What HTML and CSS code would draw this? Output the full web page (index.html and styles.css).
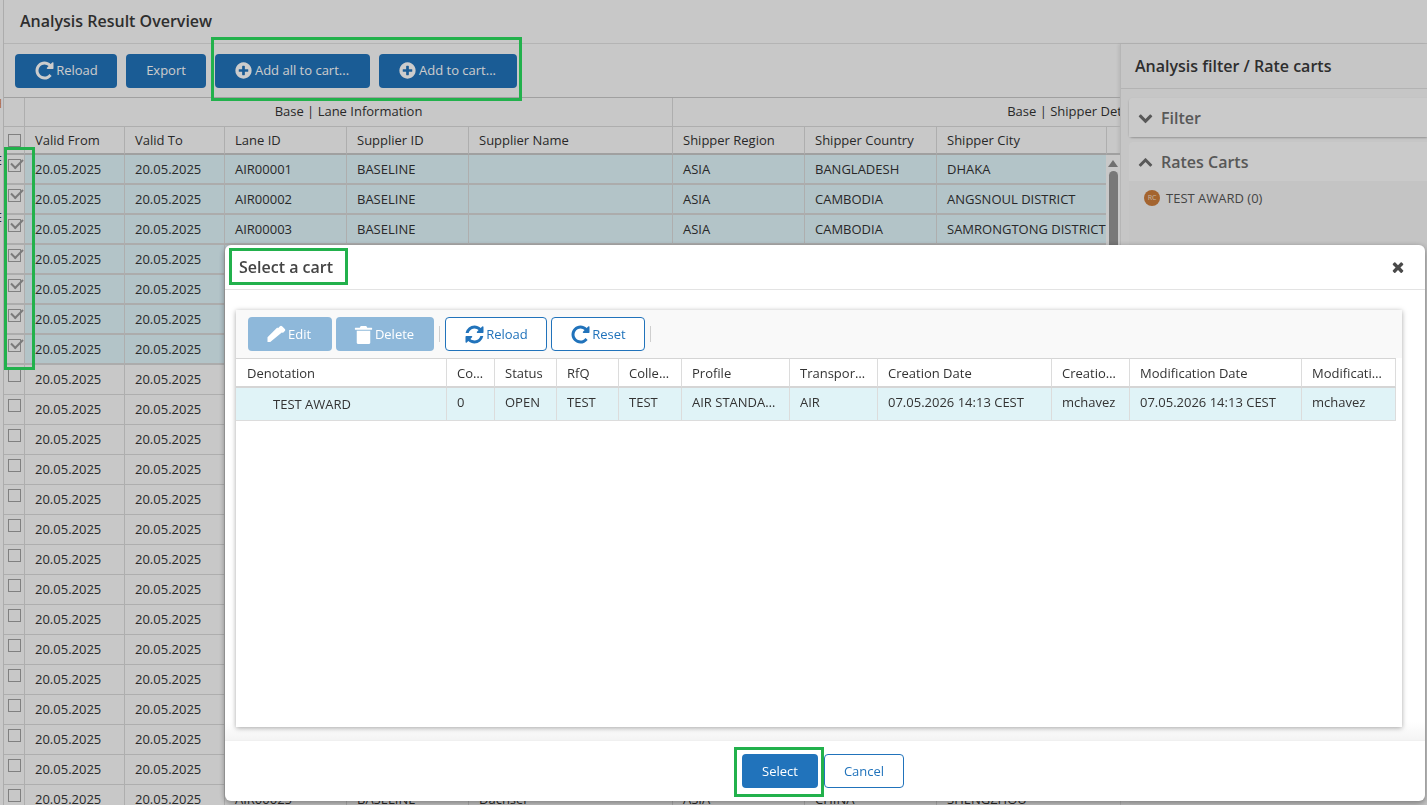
FILE: index.html
```html
<!DOCTYPE html>
<html lang="en">
<head>
    <meta charset="UTF-8">
    <title>Analysis Result Overview</title>
    <link rel="stylesheet" href="styles.css">
</head>
<body>
    <svg class="sprite" xmlns="http://www.w3.org/2000/svg">
        <symbol id="i-repeat" viewBox="0 0 1792 1792"><path d="M1664 256v448q0 26-19 45t-45 19h-448q-42 0-59-40-17-39 14-69l138-138q-148-137-349-137-104 0-198.500 40.500t-163.500 109.500-109.500 163.500-40.500 198.500 40.500 198.500 109.500 163.500 163.500 109.500 198.500 40.500q119 0 225-52t179-147q7-10 23-12 15 0 25 9l137 138q9 8 9.500 20.500t-7.500 22.500q-109 132-264 204.500t-327 72.500q-156 0-298-61t-245-164-164-245-61-298 61-298 164-245 245-164 298-61q147 0 284.500 55.500t244.500 156.500l130-129q29-31 70-14 39 17 39 59z"/></symbol>
        <symbol id="i-plus" viewBox="0 0 1792 1792"><path d="M1344 960v-128q0-26-19-45t-45-19h-256v-256q0-26-19-45t-45-19h-128q-26 0-45 19t-19 45v256h-256q-26 0-45 19t-19 45v128q0 26 19 45t45 19h256v256q0 26 19 45t45 19h128q26 0 45-19t19-45v-256h256q26 0 45-19t19-45zm320-64q0 209-103 385.500t-279.500 279.500-385.500 103-385.500-103-279.500-279.500-103-385.500 103-385.500 279.500-279.500 385.500-103 385.500 103 279.500 279.500 103 385.500z"/></symbol>
        <symbol id="i-refresh" viewBox="0 0 1792 1792"><path d="M1639 1056q0 5-1 7-64 268-268 434.500t-478 166.500q-146 0-282.500-55t-243.500-157l-129 129q-19 19-45 19t-45-19-19-45v-448q0-26 19-45t45-19h448q26 0 45 19t19 45-19 45l-137 137q71 66 161 102t187 36q134 0 250-65t186-179q11-17 53-117 8-23 30-23h192q13 0 22.500 9.500t9.500 22.500zm25-800v448q0 26-19 45t-45 19h-448q-26 0-45-19t-19-45 19-45l138-138q-148-137-349-137-134 0-250 65t-186 179q-11 17-53 117-8 23-30 23h-199q-13 0-22.500-9.500t-9.500-22.500v-7q65-268 270-434.500t480-166.500q146 0 284 55.500t245 156.500l130-129q19-19 45-19t45 19 19 45z"/></symbol>
        <symbol id="i-pencil" viewBox="0 0 1792 1792"><path d="M363 1536l-1 0H128v-416l832-832 416 416zM1643 512q0 53-37 90l-166 166-416-416 166-165q36-38 90-38 53 0 91 38l235 234q37 39 37 91z"/></symbol>
        <symbol id="i-trash" viewBox="0 0 1792 1792"><path d="M320 576h1152v1024q0 96-96 96H416q-96 0-96-96zM192 320h384l64-128q16-32 64-32h384q48 0 64 32l64 128h384q32 0 32 32v96q0 32-32 32H192q-32 0-32-32v-96q0-32 32-32z"/></symbol>
        <symbol id="i-down" viewBox="0 0 1792 1792"><path d="M1683 808l-742 741q-19 19-45 19t-45-19l-742-741q-19-19-19-45.500t19-45.500l166-165q19-19 45-19t45 19l531 531 531-531q19-19 45-19t45 19l166 165q19 19 19 45.500t-19 45.500z"/></symbol>
        <symbol id="i-up" viewBox="0 0 1792 1792"><path d="M1683 1331l-166 165q-19 19-45 19t-45-19l-531-531-531 531q-19 19-45 19t-45-19l-166-165q-19-19-19-45.500t19-45.500l742-741q19-19 45-19t45 19l742 741q19 19 19 45.500t-19 45.500z"/></symbol>
        <symbol id="i-times" viewBox="0 0 1792 1792"><path d="M1490 1322q0 40-28 68l-136 136q-28 28-68 28t-68-28l-294-294-294 294q-28 28-68 28t-68-28l-136-136q-28-28-28-68t28-68l294-294-294-294q-28-28-28-68t28-68l136-136q28-28 68-28t68 28l294 294 294-294q28-28 68-28t68 28l136 136q28 28 28 68t-28 68l-294 294 294 294q28 28 28 68z"/></symbol>
    </svg>

    <div class="page">
        <div class="side-strip">
            <span class="strip-mark mark-h">H</span>
            <span class="strip-mark mark-b1">E</span>
            <span class="strip-mark mark-b2">E</span>
        </div>
        <div class="content">
            <div class="page-title">Analysis Result Overview</div>
            <div class="main">
                <div class="left-panel">
                    <div class="toolbar">
                        <button class="btn btn-primary btn-reload"><svg class="icon icon-xl"><use href="#i-repeat"/></svg>Reload</button>
                        <button class="btn btn-primary btn-export">Export</button>
                        <button class="btn btn-primary btn-addall"><svg class="icon icon-lg"><use href="#i-plus"/></svg>Add all to cart...</button>
                        <button class="btn btn-primary btn-add"><svg class="icon icon-lg"><use href="#i-plus"/></svg>Add to cart...</button>
                    </div>
                    <div class="grid-wrap">
                        <table class="grid">
                            <colgroup>
                                <col class="col-check"><col class="col-date"><col class="col-date"><col class="col-id"><col class="col-id"><col class="col-name"><col class="col-region"><col class="col-region"><col class="col-city"><col class="col-rest">
                            </colgroup>
                            <thead>
                                <tr class="group-row">
                                    <th></th>
                                    <th colspan="5">Base | Lane Information</th>
                                    <th colspan="4">Base | Shipper Details</th>
                                </tr>
                                <tr class="head-row">
                                    <th class="check-cell"><span class="check"></span></th>
                                    <th>Valid From</th><th>Valid To</th><th>Lane ID</th><th>Supplier ID</th><th>Supplier Name</th><th>Shipper Region</th><th>Shipper Country</th><th>Shipper City</th><th></th>
                                </tr>
                            </thead>
                            <tbody>
                                <tr class="selected"><td class="check-cell"><span class="check checked"></span></td><td>20.05.2025</td><td>20.05.2025</td><td>AIR00001</td><td>BASELINE</td><td></td><td>ASIA</td><td>BANGLADESH</td><td>DHAKA</td><td></td></tr>
                                <tr class="selected"><td class="check-cell"><span class="check checked"></span></td><td>20.05.2025</td><td>20.05.2025</td><td>AIR00002</td><td>BASELINE</td><td></td><td>ASIA</td><td>CAMBODIA</td><td>ANGSNOUL DISTRICT</td><td></td></tr>
                                <tr class="selected"><td class="check-cell"><span class="check checked"></span></td><td>20.05.2025</td><td>20.05.2025</td><td>AIR00003</td><td>BASELINE</td><td></td><td>ASIA</td><td>CAMBODIA</td><td>SAMRONGTONG DISTRICT</td><td></td></tr>
                                <tr class="selected"><td class="check-cell"><span class="check checked"></span></td><td>20.05.2025</td><td>20.05.2025</td><td>AIR00004</td><td>BASELINE</td><td></td><td></td><td></td><td></td><td></td></tr>
                                <tr class="selected"><td class="check-cell"><span class="check checked"></span></td><td>20.05.2025</td><td>20.05.2025</td><td>AIR00005</td><td>BASELINE</td><td></td><td></td><td></td><td></td><td></td></tr>
                                <tr class="selected"><td class="check-cell"><span class="check checked"></span></td><td>20.05.2025</td><td>20.05.2025</td><td>AIR00006</td><td>BASELINE</td><td></td><td></td><td></td><td></td><td></td></tr>
                                <tr class="selected"><td class="check-cell"><span class="check checked"></span></td><td>20.05.2025</td><td>20.05.2025</td><td>AIR00007</td><td>BASELINE</td><td></td><td></td><td></td><td></td><td></td></tr>
                                <tr><td class="check-cell"><span class="check"></span></td><td>20.05.2025</td><td>20.05.2025</td><td></td><td></td><td></td><td></td><td></td><td></td><td></td></tr>
                                <tr><td class="check-cell"><span class="check"></span></td><td>20.05.2025</td><td>20.05.2025</td><td></td><td></td><td></td><td></td><td></td><td></td><td></td></tr>
                                <tr><td class="check-cell"><span class="check"></span></td><td>20.05.2025</td><td>20.05.2025</td><td></td><td></td><td></td><td></td><td></td><td></td><td></td></tr>
                                <tr><td class="check-cell"><span class="check"></span></td><td>20.05.2025</td><td>20.05.2025</td><td></td><td></td><td></td><td></td><td></td><td></td><td></td></tr>
                                <tr><td class="check-cell"><span class="check"></span></td><td>20.05.2025</td><td>20.05.2025</td><td></td><td></td><td></td><td></td><td></td><td></td><td></td></tr>
                                <tr><td class="check-cell"><span class="check"></span></td><td>20.05.2025</td><td>20.05.2025</td><td></td><td></td><td></td><td></td><td></td><td></td><td></td></tr>
                                <tr><td class="check-cell"><span class="check"></span></td><td>20.05.2025</td><td>20.05.2025</td><td></td><td></td><td></td><td></td><td></td><td></td><td></td></tr>
                                <tr><td class="check-cell"><span class="check"></span></td><td>20.05.2025</td><td>20.05.2025</td><td></td><td></td><td></td><td></td><td></td><td></td><td></td></tr>
                                <tr><td class="check-cell"><span class="check"></span></td><td>20.05.2025</td><td>20.05.2025</td><td></td><td></td><td></td><td></td><td></td><td></td><td></td></tr>
                                <tr><td class="check-cell"><span class="check"></span></td><td>20.05.2025</td><td>20.05.2025</td><td></td><td></td><td></td><td></td><td></td><td></td><td></td></tr>
                                <tr><td class="check-cell"><span class="check"></span></td><td>20.05.2025</td><td>20.05.2025</td><td></td><td></td><td></td><td></td><td></td><td></td><td></td></tr>
                                <tr><td class="check-cell"><span class="check"></span></td><td>20.05.2025</td><td>20.05.2025</td><td></td><td></td><td></td><td></td><td></td><td></td><td></td></tr>
                                <tr><td class="check-cell"><span class="check"></span></td><td>20.05.2025</td><td>20.05.2025</td><td></td><td></td><td></td><td></td><td></td><td></td><td></td></tr>
                                <tr><td class="check-cell"><span class="check"></span></td><td>20.05.2025</td><td>20.05.2025</td><td></td><td></td><td></td><td></td><td></td><td></td><td></td></tr>
                                <tr><td class="check-cell"><span class="check"></span></td><td>20.05.2025</td><td>20.05.2025</td><td>AIR00025</td><td>BASELINE</td><td>Dachser</td><td>ASIA</td><td>CHINA</td><td>SHENGZHOU</td><td></td></tr>
                            </tbody>
                        </table>
                        <div class="scrollbar">
                            <span class="scroll-arrow"></span>
                            <span class="scroll-thumb"></span>
                        </div>
                    </div>
                </div>
                <div class="right-panel">
                    <div class="right-title">Analysis filter / Rate carts</div>
                    <div class="right-body">
                        <div class="acc-card">
                            <div class="acc-head"><svg class="icon icon-chev"><use href="#i-down"/></svg>Filter</div>
                        </div>
                        <div class="acc-card acc-open">
                            <div class="acc-head"><svg class="icon icon-chev"><use href="#i-up"/></svg>Rates Carts</div>
                            <div class="acc-body">
                                <div class="cart-item"><span class="cart-badge">RC</span>TEST AWARD (0)</div>
                            </div>
                        </div>
                    </div>
                </div>
            </div>
        </div>
    </div>

    <div class="backdrop"></div>

    <div class="modal">
        <div class="modal-head">
            <span class="modal-title">Select a cart</span>
            <svg class="icon icon-close"><use href="#i-times"/></svg>
        </div>
        <div class="modal-body">
            <div class="cart-panel">
                <div class="cart-toolbar">
                    <button class="btn btn-disabled btn-edit"><svg class="icon icon-xl"><use href="#i-pencil"/></svg>Edit</button>
                    <button class="btn btn-disabled btn-delete"><svg class="icon icon-xl"><use href="#i-trash"/></svg>Delete</button>
                    <span class="tool-sep"></span>
                    <button class="btn btn-outline btn-reload2"><svg class="icon icon-xl"><use href="#i-refresh"/></svg>Reload</button>
                    <button class="btn btn-outline btn-reset"><svg class="icon icon-xl"><use href="#i-repeat"/></svg>Reset</button>
                    <span class="tool-sep"></span>
                </div>
                <table class="cart-grid">
                    <colgroup>
                        <col class="m-deno"><col class="m-count"><col class="m-status"><col class="m-rfq"><col class="m-coll"><col class="m-profile"><col class="m-trans"><col class="m-cdate"><col class="m-cby"><col class="m-mdate"><col class="m-mby">
                    </colgroup>
                    <thead>
                        <tr>
                            <th class="deno-head">Denotation</th><th>Count</th><th>Status</th><th>RfQ</th><th>Collection</th><th>Profile</th><th>Transport mode</th><th>Creation Date</th><th>Creation user</th><th>Modification Date</th><th>Modification user</th>
                        </tr>
                    </thead>
                    <tbody>
                        <tr>
                            <td class="deno-cell">TEST AWARD</td><td>0</td><td>OPEN</td><td>TEST</td><td>TEST</td><td>AIR STANDARD</td><td>AIR</td><td>07.05.2026 14:13 CEST</td><td>mchavez</td><td>07.05.2026 14:13 CEST</td><td>mchavez</td>
                        </tr>
                    </tbody>
                </table>
            </div>
        </div>
        <div class="modal-foot">
            <button class="btn btn-solid btn-select">Select</button>
            <button class="btn btn-outline btn-cancel">Cancel</button>
        </div>
    </div>

    <div class="note note-add"></div>
    <div class="note note-checks"></div>
    <div class="note note-title"></div>
    <div class="note note-select"></div>
</body>
</html>
```

FILE: styles.css
```css
* {
    margin: 0;
    padding: 0;
    box-sizing: border-box;
}

html, body {
    height: 100%;
    overflow: hidden;
}

body {
    font-family: "Open Sans", "Liberation Sans", sans-serif;
    font-size: 13px;
    color: #333;
    background: #fbfbfb;
}

.sprite {
    display: none;
}

.icon {
    fill: currentColor;
    flex: none;
}

.icon-lg {
    width: 19px;
    height: 19px;
    margin-right: 2px;
}

.icon-xl {
    width: 21px;
    height: 21px;
    margin-right: 1px;
}

/* page behind the dialog */
.page {
    display: flex;
    height: 805px;
}

.side-strip {
    width: 4px;
    flex: none;
    border-right: 1px solid #d8d8d8;
    position: relative;
    overflow: hidden;
}

.strip-mark {
    position: absolute;
    right: 1px;
    font-size: 12px;
    line-height: 14px;
}

.mark-h { top: 97px; color: #d9822b; }
.mark-b1 { top: 154px; }
.mark-b2 { top: 211px; }

.content {
    flex: 1;
    min-width: 0;
    display: flex;
    flex-direction: column;
}

.page-title {
    height: 44px;
    padding: 10px 16px 0;
    font-size: 16px;
    font-weight: 600;
    line-height: 22px;
    color: #3a3a3a;
    border-bottom: 1px solid #e2e2e2;
}

.main {
    flex: 1;
    display: flex;
    min-height: 0;
}

.left-panel {
    width: 1116px;
    flex: none;
    display: flex;
    flex-direction: column;
    min-height: 0;
}

.toolbar {
    height: 53px;
    padding: 10px 11px 0;
    display: flex;
    gap: 9px;
}

.btn {
    height: 34px;
    border-radius: 4px;
    border: 1px solid transparent;
    font-family: inherit;
    font-size: 13px;
    display: inline-flex;
    align-items: center;
    justify-content: center;
    flex: none;
}

.toolbar .btn {
    padding-bottom: 2px;
}

.btn-primary,
.btn-solid {
    background: #2173bb;
    color: #fff;
}

.btn-disabled {
    background: #8eb8da;
    color: #fff;
}

.btn-outline {
    background: #fff;
    border-color: #2173bb;
    color: #2173bb;
}

.btn-reload { width: 102px; }
.btn-export { width: 80px; }

.toolbar .btn-addall {
    width: 155px;
    padding-right: 2px;
}

.toolbar .btn-add {
    width: 138px;
    padding-right: 2px;
}

.grid-wrap {
    flex: 1;
    min-height: 0;
    position: relative;
    overflow: hidden;
    border-top: 1px solid #c9c9c9;
}

.grid {
    width: 1473px;
    table-layout: fixed;
    border-collapse: separate;
    border-spacing: 0;
}

.col-check { width: 21px; }
.col-date { width: 100px; }
.col-id { width: 122px; }
.col-name { width: 204px; }
.col-region { width: 132px; }
.col-city { width: 170px; }
.col-rest { width: 370px; }

.grid th,
.grid td {
    height: 30px;
    padding: 0 10px 1px;
    border-right: 1px solid #dadada;
    border-bottom: 1px solid #dadada;
    font-weight: 400;
    white-space: nowrap;
    overflow: hidden;
    text-align: left;
}

.group-row th {
    height: 29px;
    padding-bottom: 2px;
    text-align: center;
    color: #333;
}

.head-row th {
    height: 28px;
    border-bottom: 2px solid #c8c8c8;
    padding-bottom: 0;
}

.grid .check-cell {
    padding: 0 0 8px 4px;
}

.grid .head-row .check-cell {
    padding-bottom: 0;
}

.check {
    display: block;
    width: 13px;
    height: 13px;
    border: 1px solid #a0a0a0;
    background: #fbfbfb;
    position: relative;
}

.check.checked::after {
    content: "";
    position: absolute;
    left: 2px;
    top: -1px;
    width: 10px;
    height: 5px;
    border-left: 2px solid #999;
    border-bottom: 2px solid #999;
    transform: rotate(-45deg);
}

.grid tr.selected td {
    background: #e0f5fb;
    border-bottom: 2px solid #d8d8d8;
    padding-bottom: 0;
}

.grid tr.selected td.check-cell {
    background: #fbfbfb;
    padding-bottom: 7px;
}

.scrollbar {
    position: absolute;
    left: 1102px;
    top: 57px;
    width: 14px;
    bottom: 0;
    background: #fbfbfb;
    display: flex;
    flex-direction: column;
    align-items: center;
}

.scroll-arrow {
    width: 0;
    height: 0;
    margin: 5px 0 4px;
    border-left: 5px solid transparent;
    border-right: 5px solid transparent;
    border-bottom: 7px solid #8d8d8d;
}

.scroll-thumb {
    width: 9px;
    height: 300px;
    border-radius: 5px;
    background: #969696;
}

.right-panel {
    flex: 1;
    min-width: 0;
    display: flex;
    flex-direction: column;
    border-left: 1px solid #e4e4e4;
    background: #f8f8f8;
    box-shadow: -2px 0 3px rgba(0, 0, 0, 0.08);
}

.right-title {
    height: 45px;
    padding: 11px 14px 0;
    font-size: 16px;
    font-weight: 600;
    line-height: 22px;
    color: #3a3a3a;
    border-bottom: 1px solid #e0e0e0;
}

.right-body {
    flex: 1;
    padding: 9px 0 0 8px;
    display: flex;
    flex-direction: column;
    gap: 5px;
}

.acc-card {
    background: #fdfdfd;
    border-radius: 4px 0 0 4px;
    box-shadow: 0 1px 2px rgba(0, 0, 0, 0.25);
}

.acc-open {
    flex: 1;
    background: #f5f5f5;
    box-shadow: none;
    display: flex;
    flex-direction: column;
}

.acc-head {
    height: 39px;
    padding-left: 9px;
    display: flex;
    align-items: center;
    gap: 8px;
    font-size: 16px;
    font-weight: 600;
    color: #6e6e6e;
    background: #fdfdfd;
    border-radius: 4px 0 0 0;
}

.icon-chev {
    width: 15px;
    height: 15px;
}

.acc-body {
    flex: 1;
    padding: 8px 15px;
}

.cart-item {
    display: flex;
    align-items: center;
    gap: 6px;
    font-size: 13px;
    line-height: 18px;
    color: #555;
}

.cart-badge {
    width: 16px;
    height: 16px;
    border-radius: 50%;
    background: #ce7d3b;
    color: #f5e3d3;
    font-size: 7px;
    text-align: center;
    line-height: 16px;
}

.backdrop {
    position: fixed;
    inset: 0;
    background: rgba(0, 0, 0, 0.2);
}

/* dialog */
.modal {
    position: fixed;
    left: 225px;
    top: 245px;
    width: 1200px;
    height: 556px;
    background: #fff;
    border-radius: 6px;
    box-shadow: 0 2px 6px rgba(0, 0, 0, 0.4);
    display: flex;
    flex-direction: column;
}

.modal-head {
    height: 45px;
    flex: none;
    padding: 0 19px 0 14px;
    display: flex;
    align-items: center;
    justify-content: space-between;
    border-bottom: 1px solid #e3e3e3;
}

.modal-title {
    font-size: 16px;
    font-weight: 600;
    color: #444;
}

.icon-close {
    width: 16px;
    height: 16px;
    color: #4a4a4a;
}

.modal-body {
    flex: 1;
    min-height: 0;
    padding: 20px 23px 13px 11px;
    border-bottom: 1px solid #f0f0f0;
    background: linear-gradient(#fff 96%, #f4f4f4);
}

.cart-panel {
    height: 100%;
    background: #fff;
    box-shadow: 0 1px 5px rgba(0, 0, 0, 0.35);
}

.cart-toolbar {
    height: 48px;
    padding: 7px 12px 0;
    background: #f9f9f9;
    display: flex;
    gap: 4px;
}

.btn-edit {
    width: 84px;
    padding-right: 3px;
}

.btn-delete {
    width: 98px;
    padding-right: 3px;
}

.btn-reload2 { width: 102px; }
.btn-reset { width: 94px; }

.tool-sep {
    width: 1px;
    height: 16px;
    margin: 9px 1px 0;
    background: #cfcfcf;
}

.cart-grid {
    width: 1160px;
    table-layout: fixed;
    border-collapse: separate;
    border-spacing: 0;
}

.m-deno { width: 211px; }
.m-count { width: 48px; }
.m-status { width: 62px; }
.m-rfq { width: 62px; }
.m-coll { width: 63px; }
.m-profile { width: 108px; }
.m-trans { width: 88px; }
.m-cdate { width: 174px; }
.m-cby { width: 78px; }
.m-mdate { width: 172px; }
.m-mby { width: 94px; }

.cart-grid th,
.cart-grid td {
    padding: 0 10px;
    font-weight: 400;
    text-align: left;
    white-space: nowrap;
    overflow: hidden;
    text-overflow: ellipsis;
    border-right: 1px solid #dcdcdc;
}

.cart-grid th {
    height: 30px;
    border-top: 1px solid #d5d5d5;
    border-bottom: 2px solid #d5d5d5;
}

.cart-grid .deno-head {
    padding-left: 11px;
}

.cart-grid td {
    height: 33px;
    background: #e0f3f7;
    border-bottom: 1px solid #dcdcdc;
    padding-bottom: 4px;
}

.cart-grid .deno-cell {
    padding: 0 0 0 37px;
}

.modal-foot {
    height: 60px;
    flex: none;
    padding-top: 13px;
    padding-right: 4px;
    display: flex;
    justify-content: center;
    gap: 6px;
}

.btn-select { width: 76px; }
.btn-cancel { width: 80px; }

/* green annotation boxes from the screenshot */
.note {
    position: fixed;
    border: 3px solid #22b14c;
    pointer-events: none;
}

.note-add { left: 211px; top: 37px; width: 311px; height: 64px; }
.note-checks { left: 4px; top: 147px; width: 31px; height: 223px; }
.note-title { left: 229px; top: 248px; width: 119px; height: 37px; }
.note-select { left: 734px; top: 747px; width: 90px; height: 50px; }
```
